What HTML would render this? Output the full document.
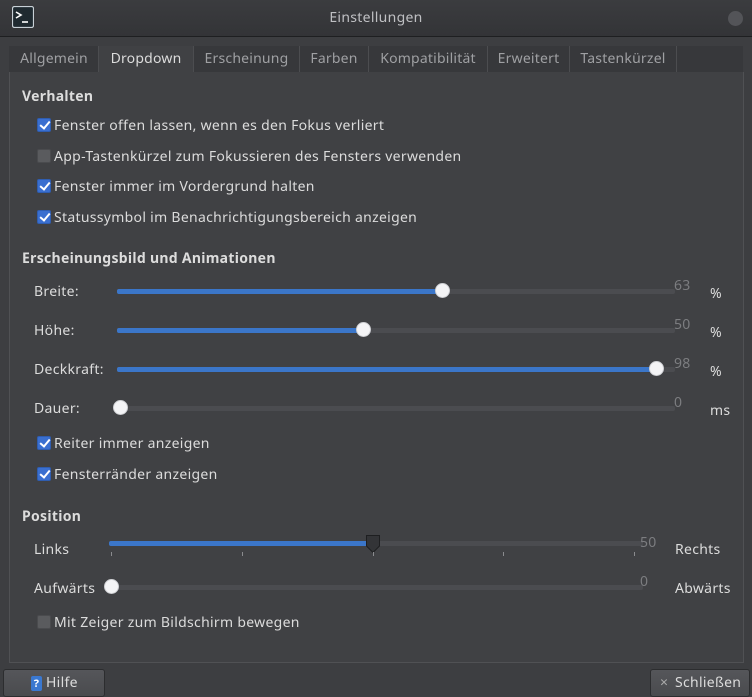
<!DOCTYPE html>
<html><head><meta charset="utf-8"><style>
*{margin:0;padding:0;box-sizing:border-box}
body{width:752px;height:695px;background:#3d3e41;font-family:"Noto Sans","Liberation Sans",sans-serif;font-size:14px;letter-spacing:0.3px;color:#dcdcdc;position:relative;overflow:hidden}
.a{position:absolute;white-space:nowrap;line-height:18px}
.t{margin-top:1px}
.title{position:absolute;left:0;top:0;width:752px;height:37px;background:linear-gradient(#3b3c3f,#333437);border-bottom:1px solid #1e1f21}
.tabbar{position:absolute;left:9px;top:46px;width:734px;height:26px;background:#37383b}
.tab{position:absolute;top:46px;height:26px;border-right:1px solid #4c4d50;color:#9fa0a3;line-height:26px;text-align:center;font-size:14px;letter-spacing:0.2px}
.tab.sel{background:#404144;color:#dcdcdc}
.panel{position:absolute;left:9px;top:72px;width:735px;height:591px;background:#404144;border:1px solid #505154;border-top:none}
.cb{position:absolute;left:37px;width:14px;height:14px;border-radius:2px;background:#5a5b5e;border:1px solid #4a4b4e}
.cb.on{background:#3a6fd0;border-color:#2f5db0}
.cb.on::after{content:"";position:absolute;left:4px;top:0px;width:4px;height:8px;border:solid #fff;border-width:0 2px 2px 0;transform:rotate(40deg)}
.track{position:absolute;height:5px;background:#4b4c50;border-radius:2px}
.fill{position:absolute;height:5px;background:#3b76c9;border-radius:2px}
.thumb{position:absolute;width:15px;height:15px;border-radius:50%;background:#f4f4f6;border:1px solid #cfd0d4}
.val{color:#7c7d80}
.b{font-weight:bold}
.btn{position:absolute;top:669px;height:28px;background:linear-gradient(#55565a,#4a4b4e);border:1px solid #2c2d2f;border-radius:3px;line-height:26px;font-size:14px}
.tick{position:absolute;top:552px;width:1px;height:4px;background:#8a8b8e}
</style></head><body>
<div class="title"></div>
<svg class="a" style="left:12px;top:6px" width="22" height="22" viewBox="0 0 22 22"><rect x="0.5" y="0.5" width="21" height="21" rx="2" fill="#1f2a30" stroke="#c7d0d6" stroke-width="1.2"/><path d="M4 6 L9 9 L4 12" stroke="#fff" stroke-width="1.6" fill="none"/><path d="M10 16 H16" stroke="#fff" stroke-width="1.6"/></svg>
<div class="a" style="left:0;width:752px;text-align:center;top:9px;color:#bfc0c3">Einstellungen</div>
<div class="a" style="left:728px;top:11px;width:15px;height:15px;border-radius:50%;background:#535458"></div>
<div class="tabbar"></div>
<div class="tab" style="left:10px;width:89px">Allgemein</div>
<div class="tab sel" style="left:99px;width:95px">Dropdown</div>
<div class="tab" style="left:194px;width:106px">Erscheinung</div>
<div class="tab" style="left:300px;width:69px">Farben</div>
<div class="tab" style="left:369px;width:119px">Kompatibilität</div>
<div class="tab" style="left:488px;width:82px">Erweitert</div>
<div class="tab" style="left:570px;width:107px">Tastenkürzel</div>
<div class="panel"></div>
<div class="a b t" style="left:22px;top:87px">Verhalten</div>
<div class="cb on" style="top:118px"></div><div class="a t" style="left:54px;top:116px">Fenster offen lassen, wenn es den Fokus verliert</div>
<div class="cb" style="top:149px"></div><div class="a t" style="left:54px;top:147px">App-Tastenkürzel zum Fokussieren des Fensters verwenden</div>
<div class="cb on" style="top:179px"></div><div class="a t" style="left:54px;top:177px">Fenster immer im Vordergrund halten</div>
<div class="cb on" style="top:210px"></div><div class="a t" style="left:54px;top:208px">Statussymbol im Benachrichtigungsbereich anzeigen</div>
<div class="a b t" style="left:22px;top:249px">Erscheinungsbild und Animationen</div>

<div class="a t" style="left:34px;top:282px">Breite:</div>
<div class="track" style="left:117px;width:558px;top:289px"></div><div class="fill" style="left:117px;width:326px;top:289px"></div><div class="thumb" style="left:435px;top:283px"></div>
<div class="a val" style="left:674px;top:277px">63</div><div class="a" style="left:710px;top:285px">%</div>

<div class="a t" style="left:34px;top:321px">Höhe:</div>
<div class="track" style="left:117px;width:558px;top:328px"></div><div class="fill" style="left:117px;width:247px;top:328px"></div><div class="thumb" style="left:356px;top:322px"></div>
<div class="a val" style="left:674px;top:316px">50</div><div class="a" style="left:710px;top:324px">%</div>

<div class="a t" style="left:34px;top:360px">Deckkraft:</div>
<div class="track" style="left:117px;width:558px;top:367px"></div><div class="fill" style="left:117px;width:540px;top:367px"></div><div class="thumb" style="left:649px;top:361px"></div>
<div class="a val" style="left:674px;top:355px">98</div><div class="a" style="left:710px;top:363px">%</div>

<div class="a t" style="left:34px;top:399px">Dauer:</div>
<div class="track" style="left:117px;width:558px;top:406px"></div><div class="thumb" style="left:113px;top:400px"></div>
<div class="a val" style="left:674px;top:394px">0</div><div class="a" style="left:710px;top:402px">ms</div>

<div class="cb on" style="top:436px"></div><div class="a t" style="left:54px;top:434px">Reiter immer anzeigen</div>
<div class="cb on" style="top:467px"></div><div class="a t" style="left:54px;top:465px">Fensterränder anzeigen</div>

<div class="a b t" style="left:22px;top:507px">Position</div>
<div class="a t" style="left:34px;top:540px">Links</div>
<div class="track" style="left:109px;width:534px;top:541px"></div><div class="fill" style="left:109px;width:264px;top:541px"></div>
<svg class="a" style="left:365px;top:534px" width="16" height="20" viewBox="0 0 16 20"><path d="M1.5 1.5 H14.5 V12 L8 18.5 L1.5 12 Z" fill="#333437" stroke="#1e1f21"/></svg>
<div class="tick" style="left:111px"></div><div class="tick" style="left:242px"></div><div class="tick" style="left:373px"></div><div class="tick" style="left:503px"></div><div class="tick" style="left:634px"></div>
<div class="a val" style="left:640px;top:534px">50</div><div class="a t" style="left:675px;top:540px">Rechts</div>

<div class="a t" style="left:34px;top:579px">Aufwärts</div>
<div class="track" style="left:112px;width:531px;top:585px"></div><div class="thumb" style="left:104px;top:579px"></div>
<div class="a val" style="left:640px;top:573px">0</div><div class="a t" style="left:675px;top:579px">Abwärts</div>

<div class="cb" style="top:615px"></div><div class="a t" style="left:54px;top:613px">Mit Zeiger zum Bildschirm bewegen</div>

<div class="btn" style="left:3px;width:102px"><span style="position:absolute;left:27px;top:6px;width:11px;height:15px;background:#3a78d0;border-radius:2px;color:#fff;font-size:11px;line-height:15px;text-align:center;font-weight:bold">?</span><span style="position:absolute;left:42px">Hilfe</span></div>
<div class="btn" style="left:650px;width:100px"><span style="position:absolute;left:9px;color:#aaa">×</span><span style="position:absolute;left:24px">Schließen</span></div>
</body></html>
